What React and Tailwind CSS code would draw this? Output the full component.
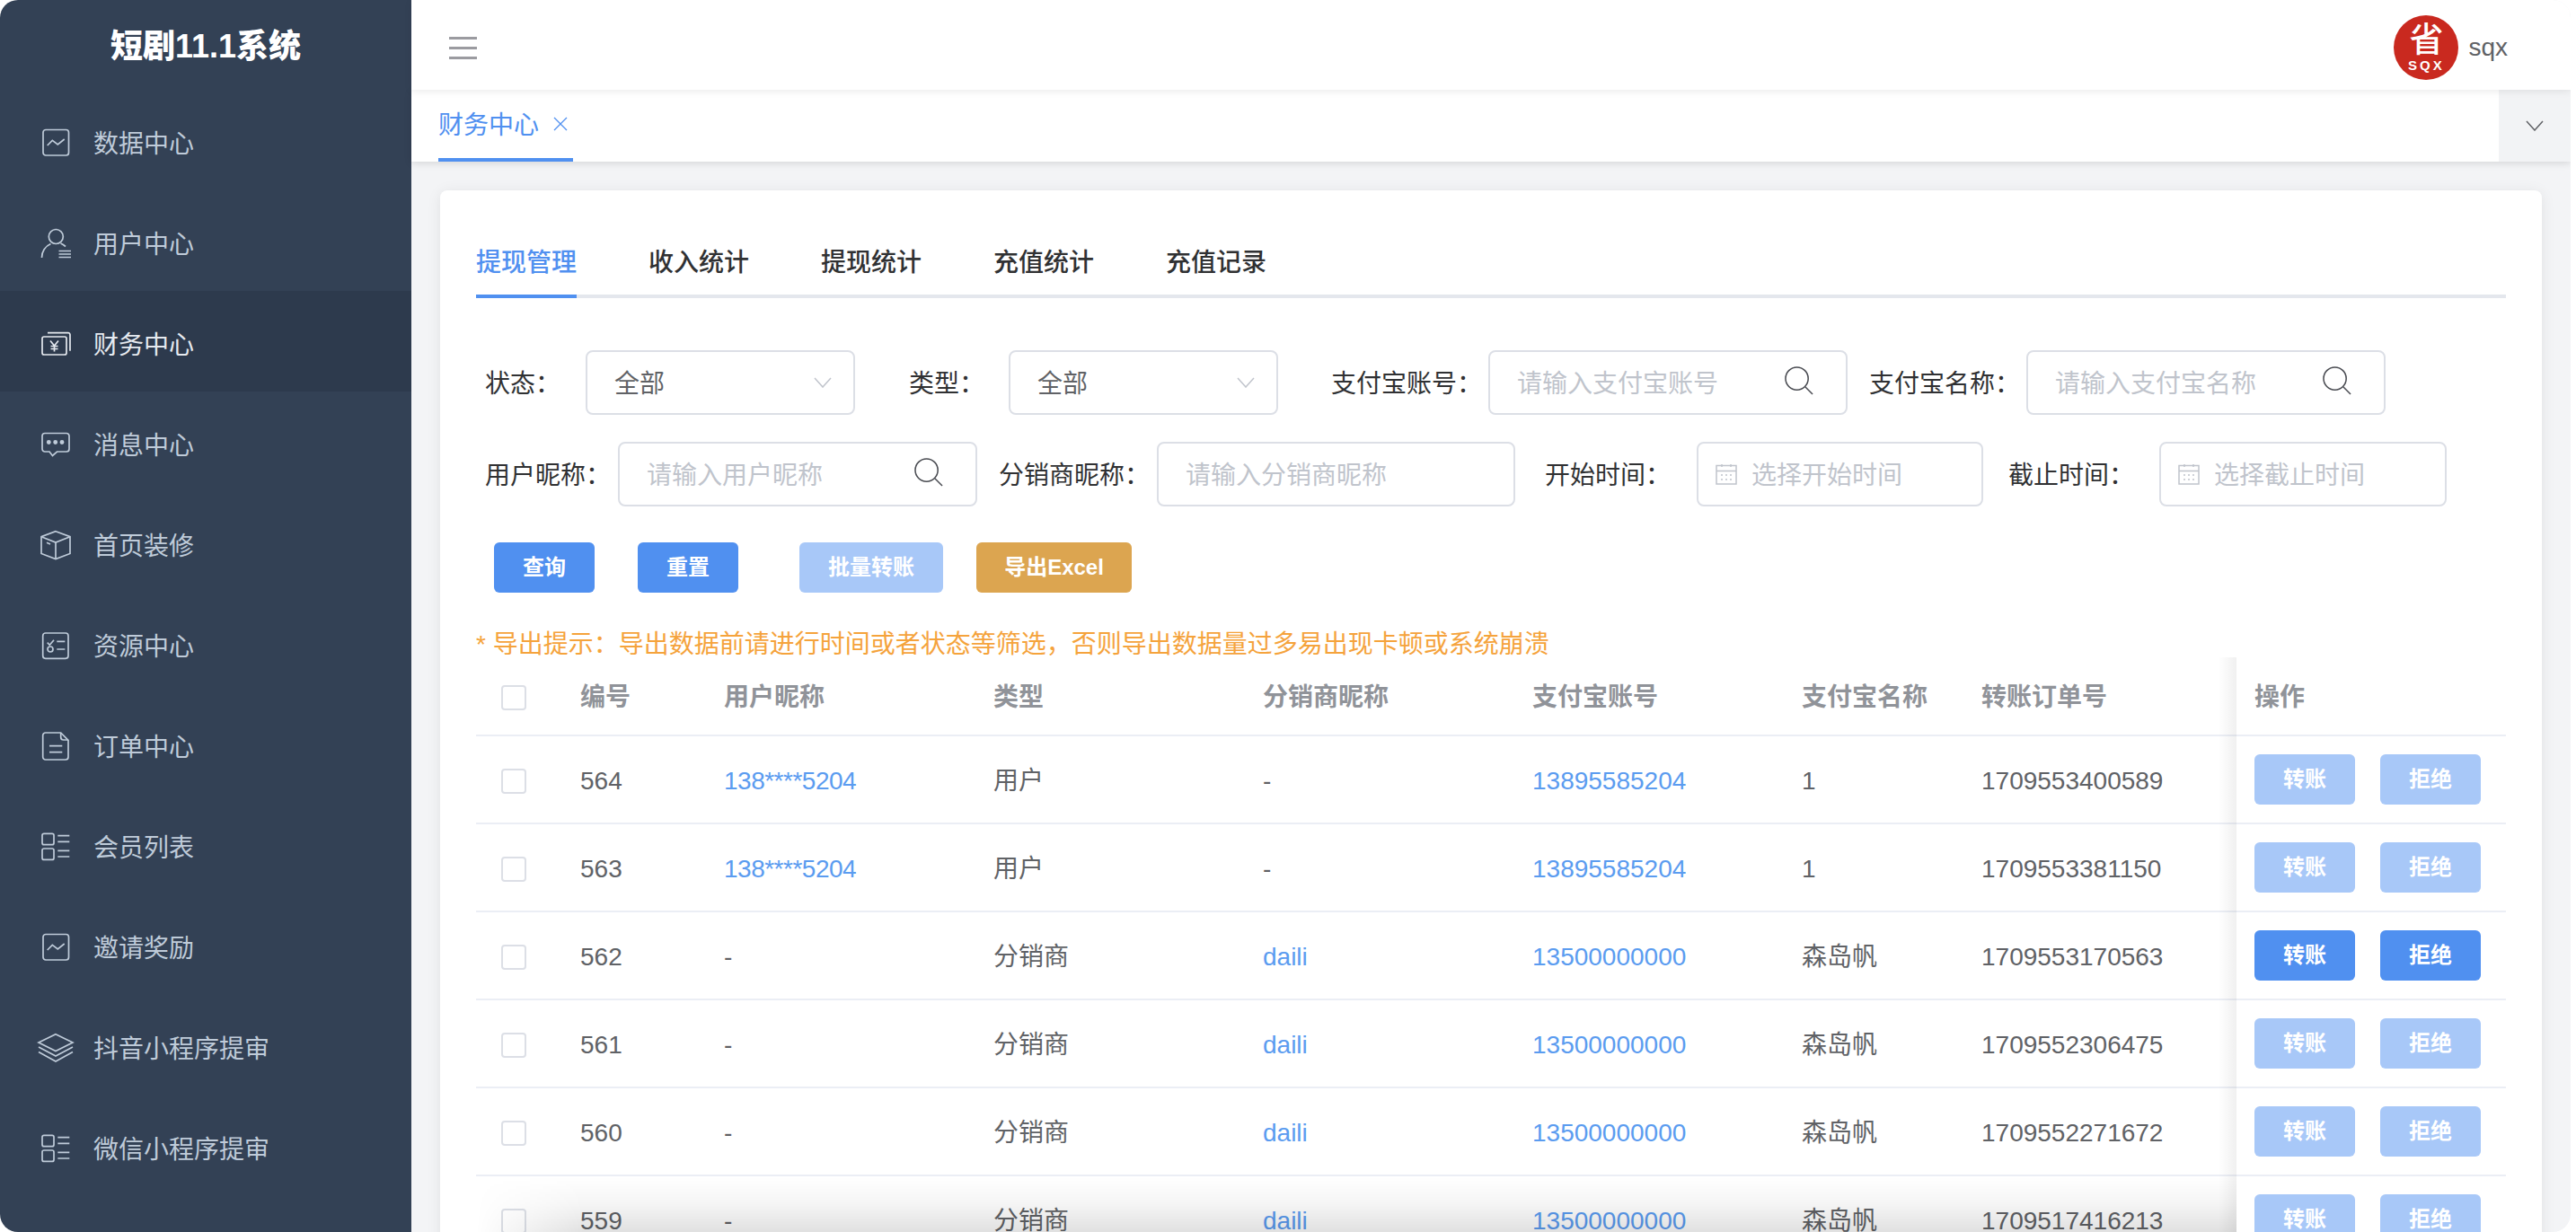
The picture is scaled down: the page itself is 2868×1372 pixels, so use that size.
import React from 'react';

const IconChart = () => (
    <>
        <rect x="2" y="1.5" width="28.5" height="28.5" rx="3" />
        <path d="M6.7 19L12.3 13.3L18.3 18L25.7 12" />
    </>
);

const IconUser = () => (
    <>
        <circle cx="16.3" cy="8.5" r="8" />
        <path d="M0.5 32A16.5 16.5 0 0 1 10.5 16.5M21.5 16Q24.5 17.2 27 19.5" />
        <path d="M19.5 24.5H33M19.5 28H33M19.5 31.5H33" />
    </>
);

const IconMoney = () => (
    <>
        <rect x="1" y="8" width="27" height="20" rx="2" />
        <path d="M7 3.7H30a2 2 0 0 1 2 2V23.7" />
        <path d="M10 12.5L14.5 18L19 12.5M14.5 18V24.5M10.5 18.5H18.5M10.5 21.5H18.5" />
    </>
);

const IconMessage = () => (
    <>
        <path d="M4 3.5H28a3 3 0 0 1 3 3V21a3 3 0 0 1-3 3H17.5L12.5 28.5L9 24H4a3 3 0 0 1-3-3V6.5a3 3 0 0 1 3-3z" />
        <circle cx="8.3" cy="13.5" r="1.6" fill="currentColor" />
        <circle cx="15.7" cy="13.5" r="1.6" fill="currentColor" />
        <circle cx="23" cy="13.5" r="1.6" fill="currentColor" />
    </>
);

const IconBox = () => (
    <>
        <path d="M16 0.7L32 6.7V25.5L16 31.5L0 25.5V6.7Z" />
        <path d="M0 6.7L16 13L32 6.7M16 13V31.5M6 13.3L10 15" />
    </>
);

const IconResource = () => (
    <>
        <rect x="1.7" y="2" width="28.3" height="28.3" rx="3" />
        <path d="M6.7 12.7L9.3 15.3L14 9.7M17.3 11.3H26.3M17.3 20H26.3" />
        <circle cx="10" cy="20" r="3" />
    </>
);

const IconDoc = () => (
    <>
        <path d="M4.7 1H21.7L30 9.3V28a3 3 0 0 1-3 3H4.7a3 3 0 0 1-3-3V4a3 3 0 0 1 3-3z" />
        <path d="M21.7 1V6a3 3 0 0 0 3 3H30M9 15.7H23.3M9 22.7H23.3" />
    </>
);

const IconGridList = () => (
    <>
        <rect x="1" y="1.3" width="13" height="12.4" rx="2" />
        <rect x="1" y="18" width="13" height="12.4" rx="2" />
        <path d="M18.3 3.7H31.3M18.3 10.3H31.3M18.3 20.3H31.3M18.3 27H31.3" />
    </>
);

const IconLayers = () => (
    <>
        <path d="M16 0.7L35 10L16 19.5L-3 10Z" />
        <path d="M-3 15L16 25L35 15M-3 20.5L16 31L35 20.5" />
    </>
);

const navItems = [
    { name: '数据中心', icon: IconChart },
    { name: '用户中心', icon: IconUser },
    { name: '财务中心', icon: IconMoney, active: true },
    { name: '消息中心', icon: IconMessage },
    { name: '首页装修', icon: IconBox },
    { name: '资源中心', icon: IconResource },
    { name: '订单中心', icon: IconDoc },
    { name: '会员列表', icon: IconGridList },
    { name: '邀请奖励', icon: IconChart },
    { name: '抖音小程序提审', icon: IconLayers },
    { name: '微信小程序提审', icon: IconGridList },
];

const tabs = ['提现管理', '收入统计', '提现统计', '充值统计', '充值记录'];

const rows = [
    { id: 564, nick: '138****5204', type: '用户', agent: '-', account: '13895585204', name: '1', order: '1709553400589' },
    { id: 563, nick: '138****5204', type: '用户', agent: '-', account: '13895585204', name: '1', order: '1709553381150' },
    { id: 562, nick: '-', type: '分销商', agent: 'daili', account: '13500000000', name: '森岛帆', order: '1709553170563', enabled: true },
    { id: 561, nick: '-', type: '分销商', agent: 'daili', account: '13500000000', name: '森岛帆', order: '1709552306475' },
    { id: 560, nick: '-', type: '分销商', agent: 'daili', account: '13500000000', name: '森岛帆', order: '1709552271672' },
    { id: 559, nick: '-', type: '分销商', agent: 'daili', account: '13500000000', name: '森岛帆', order: '1709517416213' },
];

const Chevron = ({ className }) => (
    <svg viewBox="0 0 20 12" fill="none" stroke="currentColor" strokeWidth="1.5" className={className}>
        <path d="M1 1L10 11L19 1" />
    </svg>
);

const SelectBox = () => (
    <div className="flex h-[72px] w-[300px] items-center justify-between rounded-lg border-2 border-[#dcdfe6] pl-[30px] pr-[24px] text-[#606266]">
        <span className="pt-1">全部</span>
        <Chevron className="h-3 w-5 text-[#c0c4cc]" />
    </div>
);

const SearchInput = ({ placeholder, className }) => (
    <div className={`flex h-[72px] items-center justify-between rounded-lg border-2 border-[#dcdfe6] pl-[30px] pr-[36px] text-[#c0c4cc] ${className}`}>
        <span className="pt-1">{placeholder}</span>
        <svg viewBox="0 0 33 33" fill="none" stroke="#4a4c52" strokeWidth="1.6" className="mb-1 h-8 w-8">
            <circle cx="14" cy="14" r="13" />
            <path d="M23.5 23.5L32 32" />
        </svg>
    </div>
);

const DateInput = ({ placeholder, className }) => (
    <div className={`flex h-[72px] items-center gap-4 rounded-lg border-2 border-[#dcdfe6] pl-[19px] text-[#c0c4cc] ${className}`}>
        <svg viewBox="0 0 24 24" fill="none" stroke="currentColor" strokeWidth="1.5" className="h-6 w-6">
            <rect x="1" y="2.5" width="22" height="20.5" />
            <path d="M1 8.5H23M7 1V4M17 1V4" />
            <path d="M6 13H8M11 13H13M16 13H18M6 18H8M11 18H13M16 18H18" />
        </svg>
        <span className="pt-1">{placeholder}</span>
    </div>
);

const ActionButton = ({ children, enabled }) => (
    <button className={`h-14 w-[112px] rounded-md text-2xl font-semibold text-white ${enabled ? 'bg-[#5090f0]' : 'bg-[#a8c8f8]'}`}>
        {children}
    </button>
);

const Sidebar = () => (
    <aside className="w-[458px] shrink-0 bg-[#334155]">
        <div className="flex h-[100px] items-center justify-center pt-1 text-[36px] font-black text-white">短剧11.1系统</div>
        {navItems.map((item) => {
            const Icon = item.icon;
            return (
                <div
                    key={item.name}
                    className={`flex h-[112px] items-center pt-[6px] pl-[46px] ${item.active ? 'bg-[#2d3a4d] text-[#e6eaf0]' : 'text-[#bfcbd9]'}`}
                >
                    <svg viewBox="0 0 32 32" fill="none" stroke="currentColor" strokeWidth="1.7" className="h-8 w-8 overflow-visible">
                        <Icon />
                    </svg>
                    <span className="ml-[26px] pt-1">{item.name}</span>
                </div>
            );
        })}
    </aside>
);

const Header = () => (
    <header className="relative z-20 flex h-[100px] shrink-0 items-center justify-between bg-white pl-[42px] pr-[70px] pt-[6px] shadow-[0_2px_8px_rgba(0,0,0,0.08)]">
        <div className="flex flex-col gap-2">
            <div className="h-[3px] w-[31px] bg-[#9b9ba0]" />
            <div className="h-[3px] w-[31px] bg-[#9b9ba0]" />
            <div className="h-[3px] w-[31px] bg-[#9b9ba0]" />
        </div>
        <div className="flex items-center gap-[11px]">
            <div className="flex h-[72px] w-[72px] flex-col items-center rounded-full bg-[#c9291f] text-white">
                <span className="mt-[5px] text-[38px] leading-[44px] font-medium">省</span>
                <span className="text-[15px] leading-[13px] font-bold tracking-[3px]">SQX</span>
            </div>
            <span className="text-[28px] text-[#606266]">sqx</span>
        </div>
    </header>
);

const TabBar = () => (
    <div className="relative z-10 flex h-20 shrink-0 justify-between bg-white shadow-[0_2px_8px_rgba(0,0,0,0.12)]">
        <div className="ml-[30px] flex h-20 w-[150px] items-center gap-4 border-b-4 border-[#5090f0] text-[#5090f0]">
            <span className="pt-1">财务中心</span>
            <svg viewBox="0 0 16 16" fill="none" stroke="currentColor" strokeWidth="1.3" className="h-4 w-4">
                <path d="M1 1L15 15M15 1L1 15" />
            </svg>
        </div>
        <div className="flex w-20 items-center justify-center bg-[#f2f3f5] text-[#606266]">
            <Chevron className="h-3 w-6" />
        </div>
    </div>
);

const Filters = () => (
    <>
        <div className="mt-[58px] flex items-center text-[#303133]">
            <span className="ml-[10px] w-[112px] pt-1">状态：</span>
            <SelectBox />
            <span className="ml-[60px] w-[111px] pt-1">类型：</span>
            <SelectBox />
            <span className="ml-[59px] w-[175px] pt-1">支付宝账号：</span>
            <SearchInput placeholder="请输入支付宝账号" className="w-[400px]" />
            <span className="ml-[24px] w-[175px] pt-1">支付宝名称：</span>
            <SearchInput placeholder="请输入支付宝名称" className="w-[400px]" />
        </div>
        <div className="mt-[30px] flex items-center text-[#303133]">
            <span className="ml-[10px] w-[148px] pt-1">用户昵称：</span>
            <SearchInput placeholder="请输入用户昵称" className="w-[400px]" />
            <span className="ml-[24px] w-[176px] pt-1">分销商昵称：</span>
            <div className="flex h-[72px] w-[399px] items-center rounded-lg border-2 border-[#dcdfe6] pl-[30px] pt-1 text-[#c0c4cc]">请输入分销商昵称</div>
            <span className="ml-[33px] w-[169px] pt-1">开始时间：</span>
            <DateInput placeholder="选择开始时间" className="w-[319px]" />
            <span className="ml-[28px] w-[168px] pt-1">截止时间：</span>
            <DateInput placeholder="选择截止时间" className="w-[320px]" />
        </div>
        <div className="mt-10 ml-5 flex text-2xl font-semibold text-white">
            <button className="h-14 w-[112px] rounded-md bg-[#5090f0]">查询</button>
            <button className="ml-12 h-14 w-[112px] rounded-md bg-[#5090f0]">重置</button>
            <button className="ml-[68px] h-14 w-40 rounded-md bg-[#a8c8f8]">批量转账</button>
            <button className="ml-[37px] h-14 w-[173px] rounded-md bg-[#dca550]">导出Excel</button>
        </div>
        <div className="mt-10 h-8 pt-[2px] leading-8 text-[#f5a33c]">* 导出提示：导出数据前请进行时间或者状态等筛选，否则导出数据量过多易出现卡顿或系统崩溃</div>
    </>
);

const headCell = 'h-[88px] border-b-2 border-[#ebeef5] pl-5 pt-1 text-left font-semibold text-[#909399]';
const bodyCell = 'h-[98px] border-b-2 border-[#ebeef5] pl-5 pt-[3px] text-[#606266]';
const checkCell = 'border-b-2 border-[#ebeef5] pt-[3px]';

const Checkbox = () => <div className="ml-[28px] h-7 w-7 rounded border-2 border-[#dcdfe6] bg-white" />;

const LinkText = ({ value, className = '' }) => (value === '-' ? value : <span className={`text-[#5b9cf0] ${className}`}>{value}</span>);

const WithdrawTable = () => (
    <div className="relative w-[2260px]">
        <table className="w-[2260px] table-fixed border-separate border-spacing-0">
            <colgroup>
                <col className="w-[96px]" />
                <col className="w-[160px]" />
                <col className="w-[300px]" />
                <col className="w-[300px]" />
                <col className="w-[300px]" />
                <col className="w-[300px]" />
                <col className="w-[200px]" />
                <col className="w-[304px]" />
                <col className="w-[300px]" />
            </colgroup>
            <thead>
                <tr>
                    <th className={`h-[88px] ${checkCell}`}><Checkbox /></th>
                    <th className={headCell}>编号</th>
                    <th className={headCell}>用户昵称</th>
                    <th className={headCell}>类型</th>
                    <th className={headCell}>分销商昵称</th>
                    <th className={headCell}>支付宝账号</th>
                    <th className={headCell}>支付宝名称</th>
                    <th className={headCell}>转账订单号</th>
                    <th className={headCell}>操作</th>
                </tr>
            </thead>
            <tbody>
                {rows.map((row) => (
                    <tr key={row.id}>
                        <td className={`h-[98px] ${checkCell}`}><Checkbox /></td>
                        <td className={bodyCell}>{row.id}</td>
                        <td className={bodyCell}><LinkText value={row.nick} className="tracking-[-0.5px]" /></td>
                        <td className={bodyCell}>{row.type}</td>
                        <td className={bodyCell}><LinkText value={row.agent} /></td>
                        <td className={bodyCell}><LinkText value={row.account} /></td>
                        <td className={bodyCell}>{row.name}</td>
                        <td className={bodyCell}>{row.order}</td>
                        <td className="h-[98px] border-b-2 border-[#ebeef5] pl-5">
                            <div className="flex gap-7">
                                <ActionButton enabled={row.enabled}>转账</ActionButton>
                                <ActionButton enabled={row.enabled}>拒绝</ActionButton>
                            </div>
                        </td>
                    </tr>
                ))}
            </tbody>
        </table>
        {/* fixed column shadow */}
        <div className="absolute top-0 bottom-0 left-[1940px] w-5 bg-linear-to-l from-black/6 to-transparent" />
    </div>
);

const App = () => (
    <div className="relative flex h-[1372px] w-[2862px] overflow-hidden rounded-[20px] text-[28px] [font-family:'Liberation_Sans','Noto_Sans_CJK_SC',sans-serif]">
        <Sidebar />
        <main className="flex min-w-0 flex-1 flex-col bg-[#f3f4f6]">
            <Header />
            <TabBar />
            <div className="ml-8 mt-8 w-[2340px] rounded-lg bg-white px-10 pt-10 shadow-[0_2px_16px_rgba(0,0,0,0.08)]">
                <div className="flex h-20 w-[2260px] gap-20 border-b-4 border-[#e4e7ed]">
                    {tabs.map((tab, i) => (
                        <div
                            key={tab}
                            className={`flex h-20 items-center border-b-4 pt-[6px] font-medium ${i === 0 ? 'border-[#5090f0] text-[#5090f0]' : 'border-transparent text-[#303133]'}`}
                        >
                            {tab}
                        </div>
                    ))}
                </div>
                <Filters />
                <WithdrawTable />
            </div>
        </main>
        {/* list scroll fade at the bottom edge */}
        <div className="absolute bottom-0 left-[530px] h-[62px] w-[1960px] bg-linear-to-t from-black/12 via-black/4 to-transparent [mask-image:linear-gradient(to_right,transparent,black_120px)]" />
    </div>
);

export default App;
